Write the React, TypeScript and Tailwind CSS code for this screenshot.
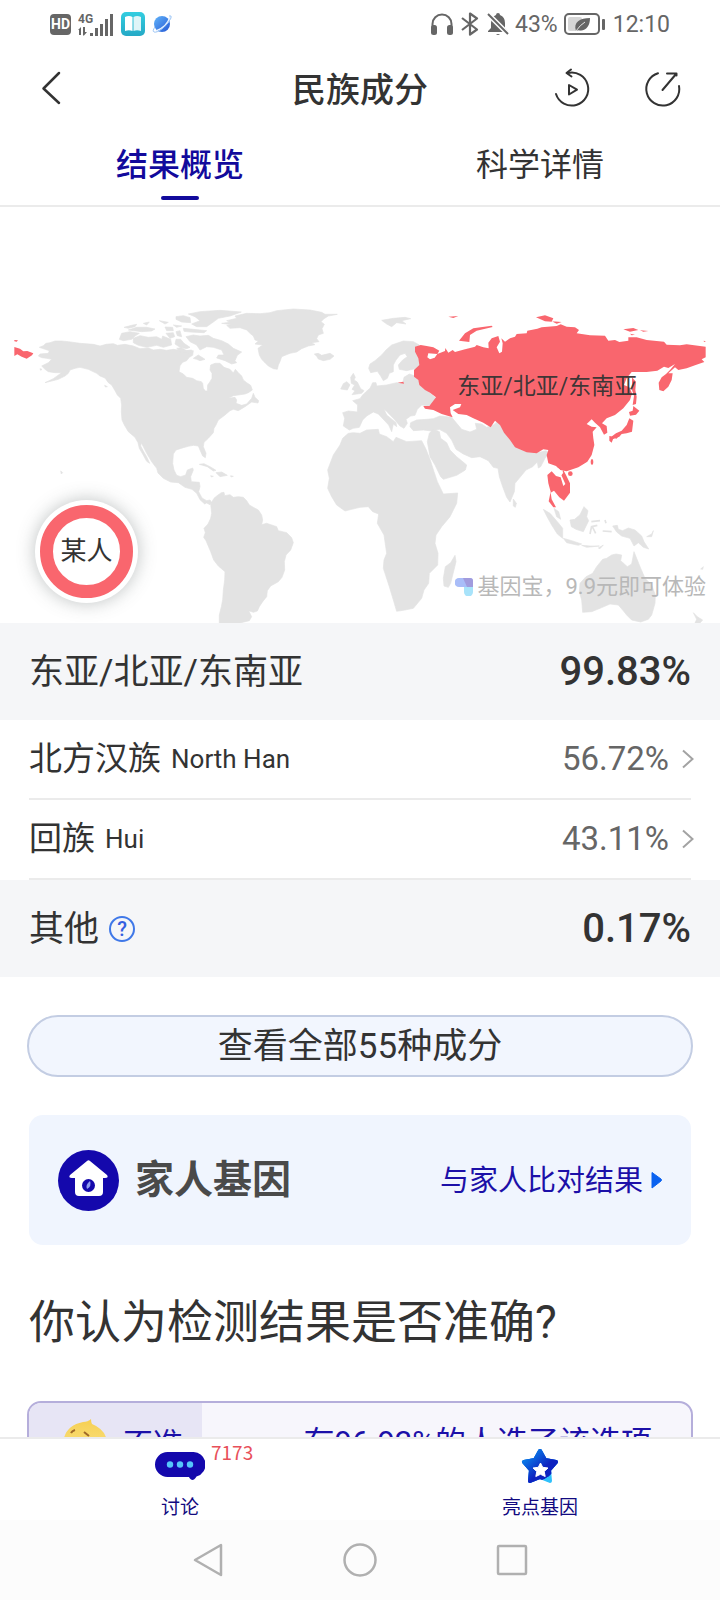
import React from "react";

const rows = [
  { name: "北方汉族", latin: "North Han", value: "56.72%" },
  { name: "回族", latin: "Hui", value: "43.11%" },
];

const StatusBar = () => (
  <div className="flex h-12 items-center justify-between pl-[50px] pr-[50px] text-[#666666]">
    <div className="flex items-center gap-[7px]">
      <span className="flex h-[21px] w-[21px] items-center justify-center rounded-[4px] bg-[#666666] text-[14px] font-bold text-white">
        HD
      </span>
      <svg width="36" height="23" viewBox="0 0 36 23" fill="currentColor">
        <text x="0" y="10" fontSize="12" fontWeight="700" fontFamily="Roboto, sans-serif">4G</text>
        <path d="M3 14v8h-2v-5h-1zM5 14h2v5h2l-3 3.500h-1zM12 20h3v3h-3zM17 15h3v8h-3zM22 11h3v12h-3zM27 6h3v17h-3zM32 1h3v22h-3z" />
      </svg>
      <svg width="24" height="24" viewBox="0 0 24 24">
        <defs>
          <linearGradient id="book" x1="0" y1="0" x2="0" y2="1">
            <stop offset="0" stopColor="#33cde0" />
            <stop offset="1" stopColor="#25a9c6" />
          </linearGradient>
        </defs>
        <rect width="24" height="24" rx="5" fill="url(#book)" />
        <path d="M4 5q4-2 7.500 0v14q-3.500-1.500-7.500 0z" fill="#fff" />
        <path d="M20 5q-4-2-7.500 0v14q3.500-1.500 7.500 0z" fill="#dff5f8" />
      </svg>
      <svg width="22" height="22" viewBox="0 0 22 22">
        <defs>
          <linearGradient id="planet" x1="0" y1="0" x2="1" y2="1">
            <stop offset="0" stopColor="#62b5fa" />
            <stop offset="1" stopColor="#2457d4" />
          </linearGradient>
        </defs>
        <circle cx="10" cy="11" r="8" fill="url(#planet)" />
        <path d="M4 18Q15 14 18 4" fill="none" stroke="#e8f2ff" strokeWidth="1.500" />
        <path d="M3 14q-3 4-1 5 3 1 9-4 6-5 8-10 1-3-2-2" fill="none" stroke="#9cc5f5" strokeWidth="1" />
      </svg>
    </div>
    <div className="flex items-center gap-[6px] text-[23px] leading-none">
      <svg width="22" height="22" viewBox="0 0 22 22" fill="currentColor">
        <path d="M1.500 15v-4a9.500 9.500 0 0 1 19 0v4" fill="none" stroke="currentColor" strokeWidth="2" />
        <rect x="0" y="12" width="6" height="10" rx="2.500" />
        <rect x="16" y="12" width="6" height="10" rx="2.500" />
      </svg>
      <svg className="ml-[2px]" width="18" height="24" viewBox="0 0 18 24" fill="none" stroke="currentColor" strokeWidth="2.200" strokeLinejoin="round">
        <path d="M1 6l15 11.500L9 22.500V1.500L16 6.500L1 18" />
      </svg>
      <svg className="ml-[2px]" width="22" height="24" viewBox="0 0 22 24" fill="currentColor">
        <path d="M9 3q0-2 2-2t2 2q5 2 5 8v5l3 3v1H1v-1l3-3v-5q0-6 5-8zM9 22h4q-2 2-4 0z" />
        <path d="M0 1L21 22" stroke="#fff" strokeWidth="5" />
        <path d="M1 2L21 22" stroke="currentColor" strokeWidth="2" />
      </svg>
      <span>43%</span>
      <svg width="41" height="23" viewBox="0 0 41 23">
        <rect x="1" y="1" width="34" height="20" rx="4" fill="none" stroke="#666" strokeWidth="2" />
        <rect x="4" y="4" width="14" height="14" rx="2" fill="#d6d6d6" />
        <path d="M12 18C9 9 16 5 26 5c0 9-5 14-12 12z" fill="#666" />
        <path d="M12 18q4-6 9-9" fill="none" stroke="#e5e5e5" strokeWidth="1" />
        <rect x="38" y="6" width="3" height="11" rx="1" fill="#666" />
      </svg>
      <span className="ml-[2px]">12:10</span>
    </div>
  </div>
);

const Header = () => (
  <header className="grid h-[84px] grid-cols-3 items-center px-[38px] text-[#333333]">
    <button aria-label="返回" className="justify-self-start pb-1">
      <svg width="26" height="36" viewBox="0 0 26 36" fill="none" stroke="#333" strokeWidth="2.500" strokeLinecap="round" strokeLinejoin="round">
        <path d="M21 3L5.500 18.500L21 33" />
      </svg>
    </button>
    <h1 className="text-center text-[34px] font-medium leading-[50px]">民族成分</h1>
    <div className="flex gap-[53px] justify-self-end pb-1">
      <button aria-label="回放">
        <svg width="38" height="40" viewBox="0 0 38 40" fill="none" stroke="#333" strokeWidth="2" strokeLinecap="round" strokeLinejoin="round">
          <path d="M3 26A16.500 16.500 0 1 0 15 5" />
          <path d="M18 1.500L13.500 5L18.500 8.500" />
          <path d="M16 17v9.500l8-4.800z" />
        </svg>
      </button>
      <button aria-label="分享">
        <svg width="38" height="40" viewBox="0 0 38 40" fill="none" stroke="#333" strokeWidth="2" strokeLinecap="round" strokeLinejoin="round">
          <path d="M14 5.300A16.500 16.500 0 1 0 35 18" />
          <path d="M18.500 22L32.500 5.500M23 5.500h9.500v2" />
        </svg>
      </button>
    </div>
  </header>
);

const Tabs = () => (
  <nav className="grid h-[75px] grid-cols-2 border-b-2 border-[#ebebeb] text-[32px] leading-[48px]">
    <button className="flex flex-col items-center pt-[9px] font-medium text-[#120a9c]">
      结果概览
      <span className="mt-[7px] h-1 w-[38px] rounded-full bg-[#120a9c]" />
    </button>
    <button className="flex flex-col items-center pt-[9px] text-[#333333]">科学详情</button>
  </nav>
);

const WorldMap = () => (
  <svg viewBox="0 0 2160 999" className="block h-auto w-full">
    <g fill="#e3e3e3" stroke="#e3e3e3" strokeWidth="2" strokeLinejoin="round">
      {/* north america */}
      <path d="M118 172L130 167L138 160L150 158L165 153L185 153L205 155L240 160L280 163L300 168L318 163L340 161L352 166L375 163L400 168L420 176L445 174L460 180L480 178L500 181L520 178L548 182L580 182L578 196L568 202L560 212L548 217L540 227L537 245L550 252L560 262L578 265L590 272L604 275L608 280L610 295L616 303L622 303L623 285L630 275L636 265L636 250L630 240L632 225L645 220L660 220L672 232L690 238L700 249L706 238L715 248L725 258L730 270L740 278L752 286L757 300L745 308L735 312L715 315L700 317L685 325L705 322L710 330L708 340L725 346L740 342L755 325L760 310L765 322L776 332L774 339L755 336L735 350L715 362L700 358L690 362L675 375L655 390L648 405L642 415L640 428L625 445L612 457L610 470L618 490L616 503L608 498L600 480L595 468L580 466L565 469L550 473L528 480L520 492L518 520L522 540L530 556L542 560L557 555L562 540L578 534L580 540L572 560L574 575L598 577L600 590L596 605L606 624L620 632L630 630L635 637L630 644L620 639L614 642L600 629L590 610L576 598L555 592L535 578L512 576L490 565L474 549L470 535L455 515L440 490L430 470L424 458L422 468L432 487L440 500L449 520L440 514L428 492L418 475L414 458L405 442L385 425L373 405L366 390L364 365L365 345L362 325L352 315L345 302L335 285L325 278L315 264L300 258L290 250L265 238L240 232L225 235L210 240L205 250L195 258L175 268L135 278L160 266L185 248L165 248L145 245L135 238L125 228L145 218L155 208L140 205L125 203L115 198L120 192L145 190L148 182Z" />
      {/* arctic islands */}
      <path d="M372 112L395 106L410 103L405 110L385 115ZM430 100L448 96L440 105ZM365 130L390 125L418 130L405 138L395 148L370 152L358 148ZM385 120L410 112L440 112L465 117L455 123L425 125ZM400 145L420 137L445 142L470 140L485 148L488 138L512 148L515 165L490 172L470 166L440 172L415 166L400 158ZM478 92L505 97L495 102ZM495 111L518 112L520 122L500 122ZM498 130L520 128L524 140L510 145ZM520 105L545 108L530 112ZM528 80L550 77L570 83L572 98L545 96L528 88ZM550 115L580 118L620 122L612 128L570 126L552 124ZM528 125L540 122L545 140L532 137ZM528 148L542 148L552 160L570 172L560 176L540 172L525 162ZM558 140L580 135L600 138L625 136L640 145L665 152L685 162L700 175L725 186L712 196L705 212L710 218L695 222L675 212L650 204L655 195L672 195L665 180L640 172L620 170L600 180L590 165L570 155ZM580 205L595 195L615 208L600 212L590 208ZM530 175L545 173L560 182L575 180L570 190L540 185Z" />
      <path d="M565 72L600 65L660 61L724 66L690 78L655 85L640 96L620 110L590 110L575 102L600 92L585 80Z" />
      {/* greenland and iceland */}
      <path d="M665 100L690 97L680 92L710 85L705 78L740 70L780 71L810 68L830 62L880 57L930 60L965 67L975 73L1012 73L985 78L972 86L963 95L973 103L966 116L970 130L955 135L950 146L957 155L935 158L945 164L925 168L905 176L890 186L870 190L845 200L840 215L835 225L832 238L820 236L805 228L795 218L785 208L778 195L774 175L788 165L765 162L775 153L765 150L760 138L750 130L740 120L720 113L690 115L680 106L695 104Z" />
      <path d="M943 192L955 190L965 196L990 190L1002 198L990 208L970 212L955 207L950 199Z" />
      {/* caribbean */}
      <path d="M598 523L612 521L630 530L648 541L640 543L622 530ZM648 548L665 546L682 556L660 560ZM632 557L640 559L634 561ZM692 557L700 559L693 561ZM314 286L322 290L316 291ZM120 236L126 238L122 241ZM182 543L188 548L184 552Z" />
      {/* south america */}
      <path d="M632 642L642 625L650 618L664 608L672 607L674 617L690 614L700 622L715 620L730 622L740 632L748 645L762 653L775 660L785 675L788 690L785 704L800 700L830 710L835 722L860 728L875 743L880 758L872 780L858 795L853 815L854 840L846 862L835 875L812 888L802 902L800 920L788 935L778 950L772 963L760 967L746 962L755 980L748 992L720 999L658 999L658 975L664 950L668 930L670 900L674 870L675 845L655 828L641 810L632 785L618 752L611 742L616 728L612 715L624 702L632 685L635 670Z" />
      {/* europe */}
      <path d="M1052 262L1060 250L1066 262L1062 270L1072 276L1082 296L1092 302L1085 310L1056 314L1065 302L1056 298L1064 285L1054 280ZM1022 297L1030 281L1040 275L1050 284L1042 300Z" />
      <path d="M1110 222L1125 212L1145 195L1158 180L1175 165L1190 160L1210 153L1240 155L1258 165L1248 178L1258 192L1256 210L1262 222L1250 235L1220 242L1198 238L1195 225L1208 210L1222 200L1215 190L1200 195L1188 210L1180 225L1180 245L1168 250L1162 265L1150 272L1142 258L1132 244L1112 248L1106 235Z" />
      <path d="M1145 91L1180 85L1215 82L1232 86L1205 92L1218 102L1190 98L1175 110L1160 102Z" />
      <path d="M1028 368L1045 363L1072 366L1073 345L1058 332L1080 326L1088 315L1098 305L1110 295L1118 278L1128 278L1130 288L1160 285L1190 278L1208 280L1212 262L1228 252L1245 258L1256 272L1270 295L1290 310L1308 325L1300 340L1285 348L1265 345L1252 358L1245 376L1232 378L1218 388L1222 400L1212 415L1200 408L1180 385L1158 362L1152 358L1160 375L1188 398L1190 410L1180 402L1175 425L1166 405L1135 372L1120 366L1100 378L1088 390L1078 412L1060 415L1048 420L1030 408L1034 385Z" />
      {/* middle east and india */}
      <path d="M1232 398L1250 390L1280 388L1300 386L1320 378L1355 382L1370 400L1385 418L1410 426L1430 418L1426 400L1445 402L1460 412L1480 405L1492 395L1510 410L1518 435L1530 450L1555 468L1590 485L1618 487L1638 482L1648 490L1635 505L1622 530L1615 534L1612 516L1598 530L1578 540L1560 562L1545 580L1543 605L1530 636L1520 622L1508 590L1498 560L1494 535L1480 532L1465 512L1440 500L1415 503L1390 492L1368 478L1355 450L1340 430L1318 418L1295 423L1270 420L1240 422L1230 410Z" />
      <path d="M1282 455L1288 430L1300 418L1318 425L1322 445L1340 458L1350 480L1370 500L1400 525L1396 540L1370 556L1330 568L1322 560L1305 525L1290 500Z" />
      <path d="M1540 627L1549 640L1546 652L1540 648Z" />
      {/* africa */}
      <path d="M1045 430L1060 428L1080 430L1100 420L1135 418L1138 432L1160 440L1180 455L1188 442L1220 455L1265 452L1278 478L1290 508L1302 545L1312 575L1330 612L1373 609L1370 640L1350 680L1325 710L1308 735L1305 760L1314 790L1313 825L1288 850L1286 880L1272 900L1265 925L1240 955L1215 960L1190 964L1183 940L1168 890L1150 835L1152 810L1160 790L1152 735L1132 700L1136 672L1118 665L1105 650L1080 652L1055 658L1035 663L1010 645L995 620L983 595L988 565L983 540L1000 495L1020 465L1028 445Z" />
      <path d="M1365 796L1368 815L1352 880L1345 892L1332 888L1330 865L1336 830L1352 818Z" />
      {/* south-east asia and oceania */}
      <path d="M1630 658L1650 670L1672 695L1688 715L1688 745L1672 732L1655 705L1640 678ZM1662 655L1676 665L1682 688L1670 680ZM1690 745L1715 752L1745 762L1735 766L1700 758ZM1745 766L1770 768L1798 768L1760 772ZM1795 774L1810 765L1800 776Z" />
      <path d="M1710 690L1724 688L1740 674L1752 650L1764 662L1760 680L1766 692L1750 725L1728 718L1714 710Z" />
      <path d="M1774 695L1800 692M1775 708L1770 732M1775 710L1792 706M1778 712L1787 730M1815 690L1818 700M1808 723L1835 725" fill="none" strokeWidth="5" />
      <path d="M1838 708L1852 706L1855 718L1868 722L1885 714L1905 720L1925 738L1932 755L1946 777L1930 772L1915 758L1902 768L1890 745L1865 738L1850 726ZM1940 740L1955 732L1960 722L1955 740Z" />
      <path d="M1740 880L1758 860L1778 850L1790 830L1808 808L1820 805L1835 795L1848 792L1865 795L1862 812L1882 830L1895 822L1902 785L1910 805L1920 830L1935 865L1955 885L1966 915L1965 940L1955 975L1945 988L1922 996L1895 990L1880 975L1868 960L1855 945L1830 942L1800 955L1775 965L1748 967L1745 930L1738 905Z" />
      <path d="M2080 968L2092 980L2098 984L2108 990L2100 999L2085 999L2090 988ZM2102 837L2110 830L2108 838Z" />
    </g>
    <g fill="#f9666e">
      <path d="M43 150L54 151L50 155L43 154ZM43 171L60 176L70 184L82 183L100 190L96 196L80 206L65 200L52 193L43 198Z" />
      <path d="M1245 170L1262 165L1280 168L1300 172L1318 182L1312 192L1285 190L1282 202L1290 208L1304 203L1312 192L1335 183L1336 174L1345 188L1358 180L1365 186L1395 178L1425 170L1430 165L1450 172L1466 175L1465 158L1475 145L1495 138L1500 155L1490 172L1498 190L1506 185L1508 160L1504 145L1515 155L1530 145L1545 140L1550 132L1580 130L1582 122L1612 116L1625 112L1670 108L1682 103L1700 110L1725 112L1737 120L1730 130L1770 136L1815 137L1825 152L1845 150L1858 156L1885 152L1885 142L1910 142L1940 150L1992 155L2000 164L2040 166L2060 163L2117 170L2117 202L2105 208L2113 216L2085 226L2060 235L2035 240L2025 232L2005 250L2018 250L2015 270L2005 290L1990 304L1978 300L1976 278L1985 262L1998 252L2010 240L2025 222L2005 234L1992 230L1972 242L1940 246L1895 246L1880 265L1872 285L1888 292L1896 310L1890 330L1870 355L1845 375L1820 385L1806 400L1820 408L1822 428L1812 434L1800 412L1785 398L1775 388L1760 402L1775 410L1790 412L1778 425L1780 445L1783 465L1775 495L1762 515L1735 532L1700 544L1680 540L1668 528L1645 520L1640 495L1645 480L1630 478L1610 490L1580 487L1545 472L1530 450L1512 428L1500 405L1485 392L1472 412L1450 398L1420 385L1400 375L1375 372L1358 360L1380 352L1384 342L1365 342L1350 352L1352 370L1358 382L1325 372L1300 360L1275 356L1270 348L1288 348L1308 322L1290 308L1275 300L1258 285L1255 270L1242 260L1242 240L1258 225L1255 205L1245 185Z" />
      <path d="M1377 152L1395 130L1420 115L1475 107L1478 111L1430 122L1410 135L1408 156ZM1345 80L1375 78L1360 84ZM1608 82L1635 76L1660 85L1655 95L1635 94ZM1655 94L1685 96L1670 101ZM1870 118L1900 114L1915 120L1890 125ZM1920 121L1945 123L1930 125ZM1890 131L1905 134L1895 136ZM1193 278L1210 275L1212 281ZM2111 152L2118 154L2112 156Z" />
      <path d="M1896 262L1908 275L1906 300L1910 320L1908 342L1898 345L1902 318L1896 300ZM1900 348L1918 362L1908 374L1890 377L1887 366L1898 362ZM1888 385L1900 392L1896 425L1880 430L1865 432L1858 440L1838 448L1832 442L1848 430L1865 422L1880 405ZM1828 438L1842 440L1835 458L1828 452ZM1844 442L1856 440L1848 447Z" />
      <path d="M1642 555L1655 544L1668 558L1682 562L1690 588L1696 582L1684 555L1690 540L1698 555L1710 580L1710 608L1692 632L1678 622L1662 602L1652 608L1655 628L1668 652L1660 652L1646 634L1652 605L1645 580Z" />
      <ellipse cx="1711" cy="551" rx="7" ry="7" />
      <ellipse cx="1776" cy="516" rx="4" ry="9" />
    </g>
    <path d="M1662 545L1675 535L1690 548L1680 560Z" fill="#fff" />
    <text x="1372" y="312" fontSize="69" fill="#333" fillOpacity="0.95">东亚/北亚/东南亚</text>
  </svg>
);

const MapPanel = () => (
  <section className="relative pt-[83px]">
    <WorldMap />
    <div className="absolute bottom-5 left-[35px] flex h-[103px] w-[103px] items-center justify-center rounded-full bg-white shadow-[0_0_18px_rgba(70,80,80,0.35)]">
      <div className="flex h-[93px] w-[93px] items-center justify-center rounded-full border-[13px] border-[#f9666e] text-[26px] text-[#333333]">
        <span className="shrink-0 whitespace-nowrap">某人</span>
      </div>
    </div>
    <div className="absolute bottom-5 right-[14px] flex items-center gap-1 text-[22px] leading-8 text-[#b8b8b8]">
      <svg width="18" height="18" viewBox="0 0 18 18">
        <path d="M4 0h11a3 3 0 0 1 3 3v6H4a4 4 0 0 1 0-9z" fill="#a9bdf8" />
        <path d="M8 0h7a3 3 0 0 1 3 3v6h-6z" fill="#a19bdd" />
        <path d="M9 9h9v5a4 4 0 0 1-9 0z" fill="#a8e3fa" />
      </svg>
      <span>基因宝，9.9元即可体验</span>
    </div>
  </section>
);

const Composition = () => (
  <section className="text-[#333333]">
    <div className="flex h-[97px] items-center justify-between bg-[#f5f6f8] px-[29px]">
      <h2 className="pt-1 text-[35px]">东亚/北亚/东南亚</h2>
      <span className="text-[40px] font-medium">99.83%</span>
    </div>
    <ul className="px-[29px]">
      {rows.map((row) => (
        <li key={row.name} className="border-b-2 border-[#ebebeb]">
          <button className="flex h-[78px] w-full items-center justify-between text-left">
            <span className="flex items-center gap-[10px] text-[33px]">
              {row.name}
              <span className="text-[26px]">{row.latin}</span>
            </span>
            <span className="-mr-1 flex items-center gap-3 text-[33px] text-[#666666]">
              {row.value}
              <svg width="14" height="22" viewBox="0 0 14 22" fill="none" stroke="#a3a3a3" strokeWidth="2">
                <path d="M2 2.500l9.500 8.500l-9.500 8.500" />
              </svg>
            </span>
          </button>
        </li>
      ))}
    </ul>
    <div className="flex h-[97px] items-center justify-between bg-[#f5f6f8] px-[29px]">
      <div className="flex items-center gap-[10px]">
        <h2 className="pt-1 text-[35px]">其他</h2>
        <button aria-label="说明" className="flex h-[26px] w-[26px] items-center justify-center rounded-full border-2 border-[#3f78e8] text-[20px] font-medium leading-none text-[#3560e0]">
          ?
        </button>
      </div>
      <span className="text-[40px] font-medium">0.17%</span>
    </div>
  </section>
);

const FamilyCard = () => (
  <a href="#family" className="mx-[29px] mt-[38px] flex h-[130px] items-center justify-between rounded-[14px] bg-[#f0f5fe] px-[29px]">
    <div className="flex items-center gap-4">
      <svg width="61" height="61" viewBox="0 0 61 61">
        <circle cx="30.500" cy="30.500" r="30.500" fill="#1408ac" />
        <path d="M29 11q1.500-1.500 3 0l17 14q2 3-2 3h-2v14q0 4-4 4H21q-4 0-4-4V28h-3q-4 0-2-3z" fill="#fff" />
        <circle cx="30.500" cy="35.500" r="6.500" fill="#1408ac" />
        <path d="M29 39q-2-4 3-8 2 5-3 8z" fill="#8f9df0" />
      </svg>
      <h3 className="text-[39px] font-bold text-[#4a4a4a]">家人基因</h3>
    </div>
    <span className="flex items-center gap-2 text-[29px] text-[#1c10a8]">
      <span className="pt-1">与家人比对结果</span>
      <svg width="11" height="18" viewBox="0 0 11 18">
        <path d="M1 1.500L10 8q1 1 0 2L1 17z" fill="#0a62f0" stroke="#0a62f0" strokeLinejoin="round" />
      </svg>
    </span>
  </a>
);

const Vote = () => (
  <section>
    <h2 className="mx-[29px] mt-[43px] text-[46px] leading-[68px] text-[#333333]">你认为检测结果是否准确?</h2>
    <button className="mx-[27px] mt-[45px] flex h-[84px] w-[calc(100%-54px)] overflow-hidden rounded-[14px] border-2 border-[#b5aedb] bg-[#f7f6fc] text-[31px] text-[#1c10a8]">
      <span className="flex h-full w-[173px] items-center gap-4 bg-[#e7e5f5] pl-[34px] text-[30px]">
        <svg width="44" height="48" viewBox="0 0 44 48">
          <defs>
            <linearGradient id="face" x1="0" y1="0" x2="0" y2="1">
              <stop offset="0" stopColor="#f6cf52" />
              <stop offset="1" stopColor="#fbe994" />
            </linearGradient>
          </defs>
          <path d="M20 3q5 0 8-3 0 3 1 5 15 6 15 20a22 22 0 0 1-44 2Q0 7 20 3z" fill="url(#face)" />
          <path d="M8 14q1-2 4-3M21 13l5 4" fill="none" stroke="#a06a28" strokeWidth="2" />
        </svg>
        不准
      </span>
      <span className="flex h-full flex-1 items-center justify-end pr-[39px]">有96.92%的人选了该选项</span>
    </button>
  </section>
);

const BottomTabs = () => (
  <nav className="grid h-[83px] shrink-0 grid-cols-2 border-t-2 border-[#ebebeb] bg-white text-[19px] leading-6 text-[#120a80]">
    <button className="flex flex-col items-center justify-between pt-[13px]">
      <span className="relative">
        <svg width="50" height="29" viewBox="0 0 50 29">
          <path d="M12.500 0h25a12.500 12.500 0 0 1 4 24.500l-1 1.500q-3 4-6 0l-.5-1h-21.500a12.500 12.500 0 0 1 0-25z" fill="#1408ac" />
          <circle cx="15" cy="12.500" r="3.200" fill="#55c6fb" />
          <circle cx="25" cy="12.500" r="3.200" fill="#55c6fb" />
          <circle cx="35" cy="12.500" r="3.200" fill="#55c6fb" />
        </svg>
        <span className="absolute -top-3 left-14 font-['Noto_Sans_CJK_SC',sans-serif] text-[#e8505a]">7173</span>
      </span>
      讨论
    </button>
    <button className="flex flex-col items-center justify-between pt-[9px]">
      <svg width="38" height="36" viewBox="0 0 38 36" strokeLinejoin="round">
        <defs>
          <linearGradient id="star" x1="0" y1="0" x2="1" y2="1">
            <stop offset="0.100" stopColor="#0a84ec" />
            <stop offset="0.600" stopColor="#0d22c0" />
          </linearGradient>
          <clipPath id="sweep">
            <path d="M0 0H38V13Q33 32 6 36H0Z" />
          </clipPath>
        </defs>
        <path d="M19 3L24 12L35 14L28 22L29 33L19 29L9 33L10 22L3 14L14 12Z" fill="#2fc0fb" stroke="#2fc0fb" strokeWidth="4" />
        <g clipPath="url(#sweep)">
          <path d="M19 3L24 12L35 14L28 22L29 33L19 29L9 33L10 22L3 14L14 12Z" fill="#0d22c0" stroke="#0b50d8" strokeWidth="4" />
          <path d="M19 3L24 12L35 14L28 22L29 33L19 29L9 33L10 22L3 14L14 12Z" fill="url(#star)" stroke="url(#star)" strokeWidth="4" />
        </g>
        <path d="M19.500 15l2.200 4.300 5.300.7-3.800 3.500 1 5-4.700-2.200-4.700 2.200 1-5L12 20l5.300-.7z" fill="#fff" stroke="#fff" />
      </svg>
      亮点基因
    </button>
  </nav>
);

const SystemNav = () => (
  <div className="flex h-20 shrink-0 items-center justify-center gap-[118px] bg-[#fcfcfc]">
    <button aria-label="后退">
      <svg width="34" height="34" viewBox="0 0 34 34" fill="none" stroke="#b0b0b0" strokeWidth="2.500" strokeLinejoin="round">
        <path d="M30 2v30L4 17z" />
      </svg>
    </button>
    <button aria-label="主页">
      <svg width="34" height="34" viewBox="0 0 34 34" fill="none" stroke="#b0b0b0" strokeWidth="2.500">
        <circle cx="17" cy="17" r="15.500" />
      </svg>
    </button>
    <button aria-label="最近任务">
      <svg width="34" height="34" viewBox="0 0 34 34" fill="none" stroke="#b0b0b0" strokeWidth="2.500">
        <rect x="3" y="3" width="28" height="28" rx="1" />
      </svg>
    </button>
  </div>
);

const App = () => {
  return (
    <div className="flex h-screen flex-col bg-white font-['Roboto','Noto_Sans_CJK_SC',sans-serif]">
      <StatusBar />
      <Header />
      <Tabs />
      <main className="min-h-0 flex-1 overflow-hidden">
        <MapPanel />
        <Composition />
        <div className="px-[27px] pt-[38px]">
          <button className="h-[62px] w-full rounded-full border-2 border-[#c3cde3] bg-[#f2f6fe] text-[35px] leading-none text-[#333333]">
            查看全部55种成分
          </button>
        </div>
        <FamilyCard />
        <Vote />
      </main>
      <BottomTabs />
      <SystemNav />
    </div>
  );
};

export default App;
